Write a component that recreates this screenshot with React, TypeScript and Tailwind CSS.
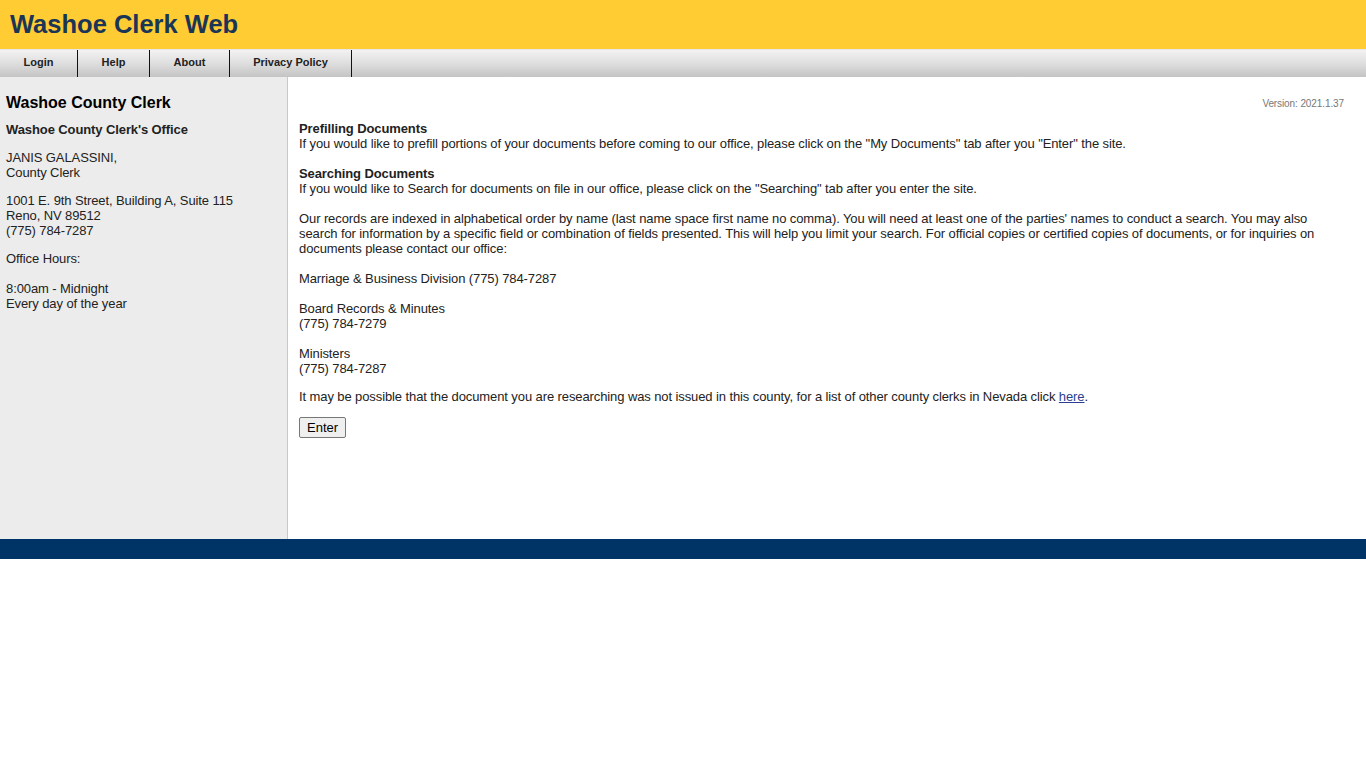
import React from "react";

export default function App() {
  const font = { fontFamily: '"Liberation Sans", Arial, sans-serif' };
  const navItems = [
    { label: "Login", w: "w-[78px]" },
    { label: "Help", w: "w-[72px]" },
    { label: "About", w: "w-[80px]" },
    { label: "Privacy Policy", w: "w-[122px]" },
  ];
  return (
    <div style={font} className="w-[1366px] bg-white text-[#222] text-[13px] leading-[15px] tracking-[-0.1px]">
      <div className="h-[49px] bg-[#ffcc33] flex items-center pl-[10px]">
        <h1 className="text-[25.5px] font-bold text-[#1b3556] leading-none tracking-normal">Washoe Clerk Web</h1>
      </div>
      <div className="h-[28px] flex bg-gradient-to-b from-[#f2f2f2] via-[#dedede] to-[#c4c4c4] border-t border-[#e6e6e6]">
        {navItems.map((n) => (
          <div
            key={n.label}
            className={`${n.w} h-full flex items-center justify-center pb-[2px] border-r border-[#111] text-[11px] font-bold text-[#222] tracking-normal`}
          >
            {n.label}
          </div>
        ))}
      </div>
      <div className="flex h-[462px]">
        <div className="w-[288px] shrink-0 bg-[#ececec] border-r border-[#c8c8c8] px-[6px] pt-[17px]">
          <h2 className="text-[16px] font-bold text-black leading-[18px] tracking-normal">Washoe County Clerk</h2>
          <p className="font-bold mt-[10px]">Washoe County Clerk's Office</p>
          <p className="mt-[13px]">
            JANIS GALASSINI,
            <br />
            County Clerk
          </p>
          <p className="mt-[13px]">
            1001 E. 9th Street, Building A, Suite 115
            <br />
            Reno, NV 89512
            <br />
            (775) 784-7287
          </p>
          <p className="mt-[13px]">
            Office Hours:
            <br />
            <br />
            8:00am - Midnight
            <br />
            Every day of the year
          </p>
        </div>
        <div className="flex-1 pl-[11px] pr-[22px] pt-[21px]">
          <div className="text-right text-[10px] leading-[12px] text-[#777]">Version: 2021.1.37</div>
          <p className="mt-[11px]">
            <b>Prefilling Documents</b>
            <br />
            If you would like to prefill portions of your documents before coming to our office, please click on the "My Documents" tab after you "Enter" the site.
            <br />
            <br />
            <b>Searching Documents</b>
            <br />
            If you would like to Search for documents on file in our office, please click on the "Searching" tab after you enter the site.
            <br />
            <br />
            Our records are indexed in alphabetical order by name (last name space first name no comma). You will need at least one of the parties' names to conduct a search. You may also search for information by a specific field or combination of fields presented. This will help you limit your search. For official copies or certified copies of documents, or for inquiries on documents please contact our office:
            <br />
            <br />
            Marriage &amp; Business Division (775) 784-7287
            <br />
            <br />
            Board Records &amp; Minutes
            <br />
            (775) 784-7279
            <br />
            <br />
            Ministers
            <br />
            (775) 784-7287
          </p>
          <p className="mt-[13px]">
            It may be possible that the document you are researching was not issued in this county, for a list of other county clerks in Nevada click{" "}
            <a className="text-[#2a3f8f] underline" href="#">here</a>.
          </p>
          <button className="mt-[13px] h-[21px] px-[7px] text-[13px] leading-none border border-[#777] rounded-[2px] bg-[#efefef] text-black tracking-normal">
            Enter
          </button>
        </div>
      </div>
      <div className="h-[20px] bg-[#003366]" />
    </div>
  );
}
